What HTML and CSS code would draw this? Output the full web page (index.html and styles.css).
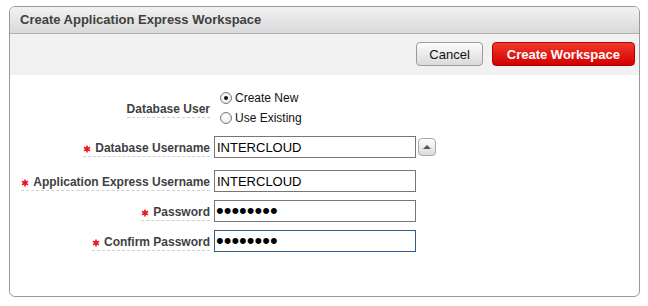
FILE: index.html
```html
<!DOCTYPE html>
<html lang="en">
<head>
  <meta charset="UTF-8" />
  <meta name="viewport" content="width=device-width, initial-scale=1.0" />
  <title>Create Application Express Workspace</title>
  <link rel="stylesheet" href="styles.css">
</head>
<body>
  <div class="region">
    <div class="region-header">
      <h1>Create Application Express Workspace</h1>
    </div>

    <!-- Buttons -->
    <div class="button-bar">
      <button class="btn">Cancel</button>
      <button class="btn btn-hot">Create Workspace</button>
    </div>

    <!-- Form -->
    <div class="form">
      <div class="form-row row-radio">
        <div class="label-cell"><label class="label">Database User</label></div>
        <div class="radio-group">
          <label class="radio-option"><input type="radio" name="dbuser" checked> Create New</label>
          <label class="radio-option"><input type="radio" name="dbuser"> Use Existing</label>
        </div>
      </div>

      <div class="form-row row-lov">
        <div class="label-cell">
          <label class="label" for="db-username"><span class="req"><svg width="8" height="8" viewBox="0 0 8 8"><path d="M4 0.5V7.5M1 2.2L7 5.8M7 2.2L1 5.8"/></svg></span>Database Username</label>
        </div>
        <input class="text-field" id="db-username" type="text" value="INTERCLOUD">
        <button class="lov-btn" aria-label="Pick"><span class="tri"></span></button>
      </div>

      <div class="form-row">
        <div class="label-cell">
          <label class="label" for="apex-username"><span class="req"><svg width="8" height="8" viewBox="0 0 8 8"><path d="M4 0.5V7.5M1 2.2L7 5.8M7 2.2L1 5.8"/></svg></span>Application Express Username</label>
        </div>
        <input class="text-field" id="apex-username" type="text" value="INTERCLOUD">
      </div>

      <div class="form-row">
        <div class="label-cell">
          <label class="label" for="password"><span class="req"><svg width="8" height="8" viewBox="0 0 8 8"><path d="M4 0.5V7.5M1 2.2L7 5.8M7 2.2L1 5.8"/></svg></span>Password</label>
        </div>
        <input class="text-field secret" id="password" type="password" value="xxxxxxxx">
      </div>

      <div class="form-row">
        <div class="label-cell">
          <label class="label" for="confirm"><span class="req"><svg width="8" height="8" viewBox="0 0 8 8"><path d="M4 0.5V7.5M1 2.2L7 5.8M7 2.2L1 5.8"/></svg></span>Confirm Password</label>
        </div>
        <input class="text-field secret focused" id="confirm" type="password" value="xxxxxxxx">
      </div>
    </div>
  </div>
</body>
</html>
```

FILE: styles.css
```css
* { margin: 0; padding: 0; box-sizing: border-box; }
body, html {
  width: 100%;
  height: 100%;
  background-color: #fff;
  font-family: "Liberation Sans", Arial, sans-serif;
  overflow: hidden;
}
.region {
  margin: 6px 8px 0 9px;
  height: 291px;
  border: 1px solid #9a9a9a;
  border-radius: 6px;
  overflow: hidden;
  background: #fff;
}
.region-header {
  height: 27px;
  background: linear-gradient(#f2f2f2, #d9d9d9);
  border-bottom: 1px solid #b0b0b0;
  padding-left: 10px;
}
.region-header h1 {
  font-size: 13px;
  line-height: 26px;
  font-weight: bold;
  color: #404040;
}
.button-bar {
  height: 41px;
  background: #f1f1f1;
  display: flex;
  justify-content: flex-end;
  align-items: flex-start;
  gap: 9px;
  padding: 8px 4px 0 0;
}
.btn {
  height: 24px;
  padding: 0 12px;
  font-family: "Liberation Sans", Arial, sans-serif;
  font-size: 13px;
  color: #111;
  border: 1px solid #9b9b9b;
  border-radius: 4px;
  background: linear-gradient(#fcfcfc, #dadada);
}
.btn-hot {
  padding: 0 14px;
  font-weight: bold;
  color: #fff;
  border-color: #b00000;
  background: linear-gradient(#f2392c, #d10000);
}
.form { padding-top: 13px; }
.form-row {
  display: flex;
  align-items: center;
  gap: 4px;
  margin-bottom: 8px;
}
.row-radio { margin-bottom: 8px; }
.row-lov { margin-bottom: 12px; gap: 0; }
.row-lov .label-cell { margin-right: 4px; }
.label-cell {
  width: 200px;
  text-align: right;
}
.label {
  display: inline-block;
  font-size: 12px;
  font-weight: bold;
  color: #3f3f3f;
  line-height: 14px;
  padding: 2px 0 1px;
  border-bottom: 1px dashed #cfcfcf;
}
.req { margin-right: 4px; }
.req svg {
  vertical-align: -1px;
  stroke: #e8141b;
  stroke-width: 1.6;
  fill: none;
}
.radio-group { display: flex; flex-direction: column; }
.radio-option {
  height: 20px;
  display: flex;
  align-items: center;
  gap: 3px;
  padding-left: 6px;
  font-size: 12px;
  color: #111;
}
.radio-option input {
  appearance: none;
  width: 12px;
  height: 12px;
  border: 1px solid #7a7a7a;
  border-radius: 50%;
  background: radial-gradient(circle at 40% 35%, #fff, #e4e4e4);
  display: grid;
  place-items: center;
}
.radio-option input:checked::after {
  content: "";
  width: 4px;
  height: 4px;
  border-radius: 50%;
  background: #111;
}
.text-field {
  width: 202px;
  height: 22px;
  border: 1px solid #767676;
  padding: 0 2px;
  font-family: "Liberation Sans", Arial, sans-serif;
  font-size: 13px;
  color: #000;
  outline: none;
}
.text-field.secret {
  font-size: 22px;
  padding: 0 1px;
}
.text-field.focused { border-color: #2e5e88; }
.lov-btn {
  width: 18px;
  height: 18px;
  margin-left: 2px;
  border: 1px solid #a8a8a8;
  border-radius: 4px;
  background: linear-gradient(#fdfdfd, #dcdcdc);
  display: grid;
  place-items: center;
}
.tri {
  width: 0;
  height: 0;
  border-left: 4px solid transparent;
  border-right: 4px solid transparent;
  border-bottom: 4px solid #555;
}
```
